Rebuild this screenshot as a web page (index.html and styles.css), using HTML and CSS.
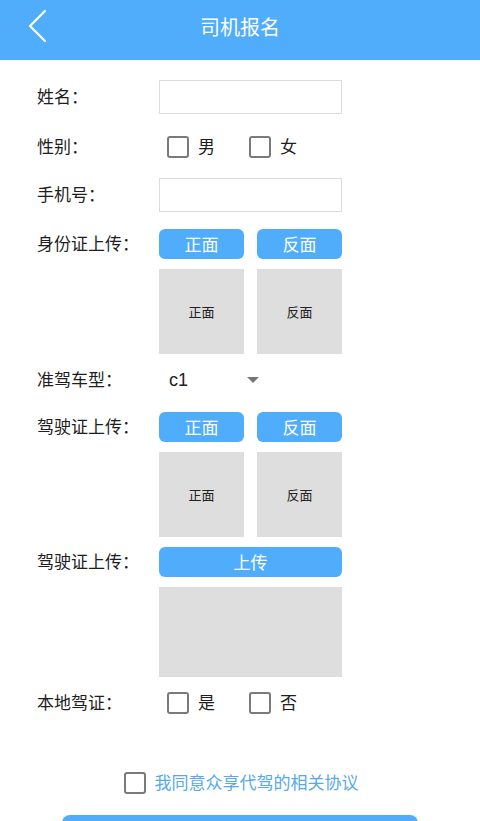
FILE: index.html
```html
<!DOCTYPE html>
<html lang="zh-CN">
<head>
<meta charset="utf-8">
<title>司机报名</title>
<link rel="stylesheet" href="styles.css">
</head>
<body>
<header class="topbar">
  <svg class="back" width="24" height="36" viewBox="0 0 24 36"><path d="M17 3 L2 18 L17 33" fill="none" stroke="#fff" stroke-width="2.2" stroke-linecap="round" stroke-linejoin="round"/></svg>
  <h1 class="title">司机报名</h1>
</header>
<main class="form">
  <div class="row r-name">
    <span class="label">姓名：</span>
    <div class="field"><div class="input"></div></div>
  </div>
  <div class="row r-gender">
    <span class="label">性别：</span>
    <div class="field options">
      <span class="opt"><span class="box"></span><span class="opt-text">男</span></span>
      <span class="opt"><span class="box"></span><span class="opt-text">女</span></span>
    </div>
  </div>
  <div class="row r-phone">
    <span class="label">手机号：</span>
    <div class="field"><div class="input"></div></div>
  </div>
  <div class="row r-btns r-id">
    <span class="label">身份证上传：</span>
    <div class="field pair">
      <span class="btn">正面</span>
      <span class="btn">反面</span>
    </div>
  </div>
  <div class="row r-photos">
    <span class="label"></span>
    <div class="field pair">
      <span class="photo">正面</span>
      <span class="photo">反面</span>
    </div>
  </div>
  <div class="row r-type">
    <span class="label">准驾车型：</span>
    <div class="field select"><span class="val">c1</span><span class="caret"></span></div>
  </div>
  <div class="row r-btns">
    <span class="label">驾驶证上传：</span>
    <div class="field pair">
      <span class="btn">正面</span>
      <span class="btn">反面</span>
    </div>
  </div>
  <div class="row r-photos">
    <span class="label"></span>
    <div class="field pair">
      <span class="photo">正面</span>
      <span class="photo">反面</span>
    </div>
  </div>
  <div class="row r-btns r-single">
    <span class="label">驾驶证上传：</span>
    <div class="field"><span class="btn wide">上传</span></div>
  </div>
  <div class="row r-big">
    <span class="label"></span>
    <div class="field"><span class="bigphoto"></span></div>
  </div>
  <div class="row r-local">
    <span class="label">本地驾证：</span>
    <div class="field options">
      <span class="opt"><span class="box"></span><span class="opt-text">是</span></span>
      <span class="opt"><span class="box"></span><span class="opt-text">否</span></span>
    </div>
  </div>
  <div class="agree"><span class="box"></span><span class="agree-text">我同意众享代驾的相关协议</span></div>
  <div class="submit"></div>
</main>
</body>
</html>
```
FILE: styles.css
```css
* { box-sizing: border-box; }
html, body { margin: 0; padding: 0; background: #fff; }
body {
  font-family: "Noto Sans CJK SC", "Noto Sans", sans-serif;
  color: #1e1e1e;
  width: 480px;
  height: 821px;
  overflow: hidden;
}
.topbar {
  height: 60px;
  background: #4fadfc;
  display: flex;
  align-items: center;
  justify-content: center;
  position: relative;
}
.back { position: absolute; left: 28px; top: 8px; }
.title {
  margin: 0 0 6px;
  font-size: 20px;
  font-weight: 400;
  color: #fff;
  line-height: 1;
}
.form { padding: 20px 0 0 37px; }
.row { display: flex; align-items: center; }
.label {
  width: 122px;
  flex: none;
  font-size: 17px;
  line-height: 1;
  color: #1e1e1e;
  padding-bottom: 3px;
}
.field { width: 183px; }
.input {
  height: 34px;
  border: 1px solid #dcdcdc;
  background: #fff;
}
.r-name { height: 34px; }
.r-gender { height: 34px; margin-top: 16px; }
.r-phone { height: 34px; margin-top: 14px; }
.options { display: flex; padding-left: 8px; gap: 34px; }
.opt {
  display: flex;
  align-items: center;
  gap: 9px;
}
.opt-text {
  font-size: 17px;
  line-height: 1;
  padding-bottom: 3px;
}
.box {
  width: 22px;
  height: 22px;
  border: 2px solid #7a7a7a;
  border-radius: 3px;
  display: inline-block;
  flex: none;
  background: #fff;
}
.r-btns { height: 30px; margin-top: 17px; }
.pair { display: flex; gap: 13px; }
.btn {
  display: flex;
  align-items: center;
  justify-content: center;
  width: 85px;
  height: 30px;
  padding-bottom: 2px;
  background: #4fadfc;
  border-radius: 6px;
  color: #fff;
  font-size: 17px;
  line-height: 1;
}
.btn.wide { width: 183px; }
.r-photos { margin-top: 10px; }
.photo {
  display: flex;
  align-items: center;
  justify-content: center;
  width: 85px;
  height: 85px;
  padding-bottom: 1px;
  background: #dedede;
  font-size: 13px;
  color: #222;
}
.r-type { height: 30px; margin-top: 11px; }
.select { display: flex; align-items: center; padding-left: 10px; }
.val {
  font-family: "Liberation Sans", Arial, sans-serif;
  font-size: 18px;
  line-height: 1;
  color: #222;
  width: 78px;
}
.caret {
  width: 0;
  height: 0;
  border-left: 6px solid transparent;
  border-right: 6px solid transparent;
  border-top: 6px solid #777;
}
.r-single { margin-top: 10px; }
.r-big { margin-top: 10px; }
.bigphoto { display: block; width: 183px; height: 90px; background: #dedede; }
.r-local { height: 30px; margin-top: 11px; }
.agree {
  margin: 50px 0 0 -37px;
  height: 30px;
  display: flex;
  align-items: center;
  justify-content: center;
  gap: 9px;
  padding-left: 2px;
}
.agree-text { font-size: 17px; line-height: 1; color: #57a9e8; padding-bottom: 3px; }
.submit {
  margin: 17px 0 0 25px;
  width: 356px;
  height: 44px;
  background: #4fadfc;
  border-radius: 8px;
}
```
